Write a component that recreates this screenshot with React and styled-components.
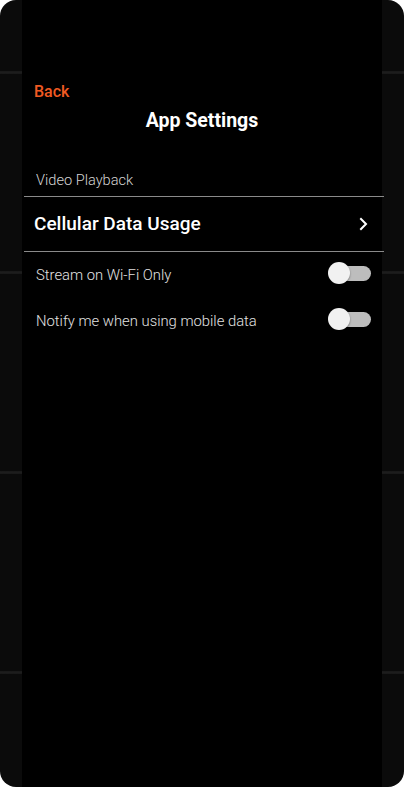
import React from "react";
import styled, { createGlobalStyle } from "styled-components";

const Global = createGlobalStyle`
  html, body { margin: 0; padding: 0; background: #ffffff; }
  body { font-family: Roboto, "Noto Sans", sans-serif; -webkit-font-smoothing: antialiased; }
  * { box-sizing: border-box; }
`;

const Frame = styled.div`
  width: 404px;
  height: 787px;
  border-radius: 16px;
  overflow: hidden;
  background-color: #0b0b0b;
  background-image: repeating-linear-gradient(
    to bottom,
    transparent 0px,
    transparent 71px,
    #181818 71px,
    #1d1d1d 72.5px,
    #181818 74px,
    transparent 74px,
    transparent 200px
  );
  display: flex;
  justify-content: center;
`;

const Screen = styled.div`
  width: 360px;
  height: 787px;
  background: #000;
  display: flex;
  flex-direction: column;
  padding-top: 82px;
`;

const BackLink = styled.a`
  align-self: flex-start;
  margin-left: 12px;
  font-size: 16px;
  line-height: 20px;
  font-weight: 500;
  color: #f05a22;
  text-decoration: none;
  cursor: pointer;
`;

const Title = styled.h1`
  margin: 7px 0 0;
  text-align: center;
  font-size: 19.5px;
  line-height: 24px;
  font-weight: 700;
  color: #ffffff;
`;

const SectionLabel = styled.div`
  margin: 37px 0 0 14px;
  font-size: 14.6px;
  line-height: 20px;
  font-weight: 300;
  color: #d4d4d4;
`;

const Divider = styled.div`
  height: 1px;
  width: 360px;
  margin-left: 2px;
  background: #8a8a8a;
  margin-top: ${(p) => p.$top || 0}px;
`;

const NavRow = styled.div`
  height: 54px;
  display: flex;
  align-items: center;
  justify-content: space-between;
  padding: 0 14px 0 12px;
  cursor: pointer;
`;

const NavLabel = styled.span`
  font-size: 19px;
  line-height: 24px;
  font-weight: 500;
  color: #ffffff;
`;

const Chevron = styled.svg`
  width: 10px;
  height: 14px;
`;

const ToggleList = styled.div`
  display: flex;
  flex-direction: column;
  gap: 4px;
`;

const ToggleRow = styled.div`
  height: 42px;
  display: flex;
  align-items: center;
  justify-content: space-between;
  padding: 0 11px 0 14px;
`;

const ToggleLabel = styled.span`
  font-size: 14.8px;
  line-height: 20px;
  font-weight: 300;
  color: #e2e2e2;
  padding-top: 3px;
`;

const Switch = styled.div`
  position: relative;
  width: 43px;
  height: 22px;
  flex-shrink: 0;
`;

const Track = styled.div`
  position: absolute;
  left: 6px;
  right: 0;
  top: 4px;
  height: 15px;
  border-radius: 8px;
  background: #bdbdbd;
`;

const Knob = styled.div`
  position: absolute;
  left: 0;
  top: 0;
  width: 22px;
  height: 22px;
  border-radius: 50%;
  background: #f1f1f1;
  box-shadow: 0 1px 2px rgba(0, 0, 0, 0.4);
`;

function Toggle() {
  return (
    <Switch role="switch" aria-checked="false">
      <Track />
      <Knob />
    </Switch>
  );
}

export default function App() {
  return (
    <>
      <Global />
      <Frame>
        <Screen>
          <BackLink>Back</BackLink>
          <Title>App Settings</Title>
          <SectionLabel>Video Playback</SectionLabel>
          <Divider $top={6} />
          <NavRow>
            <NavLabel>Cellular Data Usage</NavLabel>
            <Chevron viewBox="0 0 10 14">
              <path d="M3 2 L8 7 L3 12" fill="none" stroke="#ffffff" strokeWidth="2" strokeLinecap="square" />
            </Chevron>
          </NavRow>
          <Divider />
          <ToggleList>
            <ToggleRow>
              <ToggleLabel>Stream on Wi-Fi Only</ToggleLabel>
              <Toggle />
            </ToggleRow>
            <ToggleRow>
              <ToggleLabel>Notify me when using mobile data</ToggleLabel>
              <Toggle />
            </ToggleRow>
          </ToggleList>
        </Screen>
      </Frame>
    </>
  );
}
